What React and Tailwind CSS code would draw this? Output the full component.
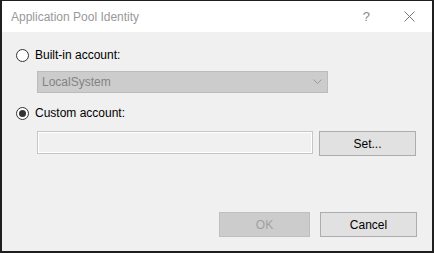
import React from 'react';

function Radio({ checked }) {
  return (
    <svg width="13" height="13" viewBox="0 0 13 13" className="shrink-0">
      <circle cx="6.5" cy="6.5" r="6" fill="#fff" stroke="#333" strokeWidth="1" />
      {checked && <circle cx="6.5" cy="6.5" r="3.5" fill="#333" />}
    </svg>
  );
}

export default function App() {
  return (
    <div
      className="w-[434px] h-[253px] flex flex-col bg-[#f0f0f0] border-x-2 border-t border-b-2 border-[#1f1f1f] text-[12px] text-black"
      style={{ fontFamily: '"Segoe UI", "Liberation Sans", sans-serif' }}
    >
      {/* Barra de título */}
      <div className="h-[31px] shrink-0 bg-white flex items-center pl-[9px]">
        <span className="text-[#999] leading-none">Application Pool Identity</span>
        <span className="ml-auto text-[#888] text-[13px] leading-none mr-[34px]">?</span>
        <svg width="11" height="11" viewBox="0 0 11 11" className="mr-[17px]">
          <path d="M0.5 0.5 L10.5 10.5 M10.5 0.5 L0.5 10.5" stroke="#777" strokeWidth="1" />
        </svg>
      </div>

      <div className="flex flex-col pl-[14px]">
        <div className="mt-[16px] h-[14px] flex items-center gap-[6px]">
          <Radio checked={false} />
          <span className="leading-none">Built-in account:</span>
        </div>

        <div className="mt-[9px] ml-[21px] w-[291px] h-[22px] bg-[#cccccc] border border-[#bcbcbc] flex items-center pl-[4px] pr-[5px]">
          <span className="text-[#838383] leading-none">LocalSystem</span>
          <svg width="9" height="6" viewBox="0 0 9 6" className="ml-auto">
            <path d="M0.5 0.5 L4.5 4.5 L8.5 0.5" fill="none" stroke="#9a9a9a" strokeWidth="1" />
          </svg>
        </div>

        <div className="mt-[13px] h-[14px] flex items-center gap-[6px]">
          <Radio checked />
          <span className="leading-none">Custom account:</span>
        </div>

        <div className="mt-[11px] ml-[21px] flex items-start gap-[6px]">
          <div className="w-[276px] h-[23px] border border-[#c6c6c6] shadow-[inset_0_0_0_1px_#fff] bg-[#f0f0f0]"></div>
          <button className="w-[97px] h-[25px] bg-[#e1e1e1] border border-[#adadad] leading-none">Set...</button>
        </div>
      </div>

      <div className="mt-[56px] flex justify-end gap-[10px] pr-[15px]">
        <button className="w-[91px] h-[25px] bg-[#cccccc] border border-[#bfbfbf] text-[#a0a0a0] leading-none">OK</button>
        <button className="w-[97px] h-[25px] bg-[#e1e1e1] border border-[#adadad] leading-none">Cancel</button>
      </div>
    </div>
  );
}
